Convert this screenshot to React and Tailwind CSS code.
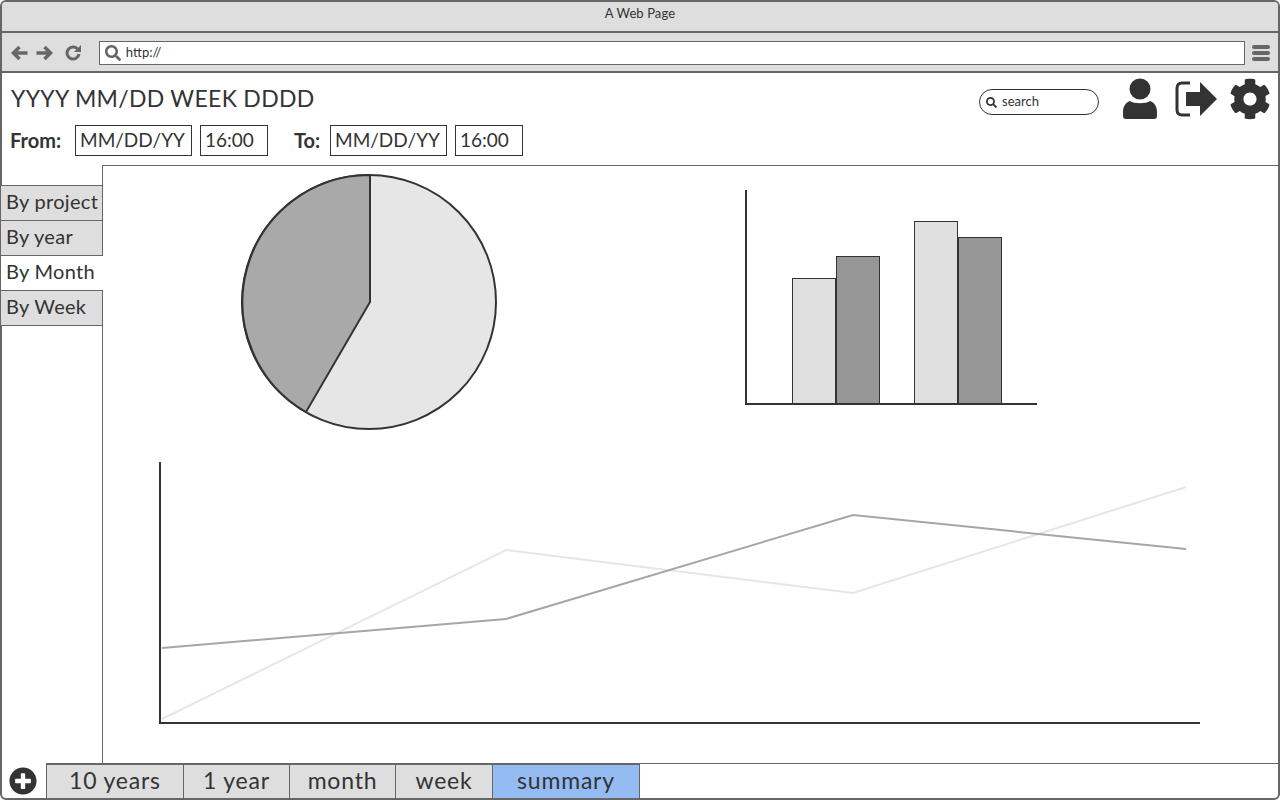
import { FaSearch, FaCog, FaPlusCircle } from 'react-icons/fa'

const font = { fontFamily: 'Lato, sans-serif' }

function PieChart() {
  return (
    <svg width="258" height="258" viewBox="0 0 258 258" className="block">
      <circle cx="128" cy="128" r="127" fill="#e6e6e6" stroke="#333" strokeWidth="2" />
      <path d="M129 128 L129 1 A127 127 0 0 0 65 238 Z" fill="#a9a9a9" stroke="#333" strokeWidth="2" />
    </svg>
  )
}

function BarChart() {
  return (
    <svg width="294" height="218" viewBox="0 0 294 218" className="block">
      <rect x="47.5" y="91.5" width="43" height="126" fill="#e0e0e0" stroke="#333" />
      <rect x="91.5" y="69.5" width="43" height="148" fill="#969696" stroke="#333" />
      <rect x="169.5" y="34.5" width="43" height="183" fill="#e0e0e0" stroke="#333" />
      <rect x="213.5" y="50.5" width="43" height="167" fill="#969696" stroke="#333" />
      <path d="M1 3 V217 H292" fill="none" stroke="#333" strokeWidth="2" />
    </svg>
  )
}

function LineChart() {
  return (
    <svg width="1042" height="262" viewBox="0 0 1042 262" className="block">
      <polyline points="3,257 347,88 694,131 1027,25" fill="none" stroke="#e6e6e6" strokeWidth="2" />
      <polyline points="3,186 347,157 694,53 1027,87" fill="none" stroke="#a6a6a6" strokeWidth="2" />
      <path d="M1 0 V261 H1041" fill="none" stroke="#333" strokeWidth="2" />
    </svg>
  )
}

function BackIcon() {
  return (
    <svg width="17" height="16" viewBox="0 0 17 16" fill="none" stroke="#666" strokeWidth="3.5">
      <path d="M8.5 2 L2.5 8 L8.5 14 M3 8 H16.5" />
    </svg>
  )
}

function ForwardIcon() {
  return (
    <svg width="17" height="16" viewBox="0 0 17 16" fill="none" stroke="#666" strokeWidth="3.5">
      <path d="M8.5 2 L14.5 8 L8.5 14 M14 8 H0.5" />
    </svg>
  )
}

function ReloadIcon() {
  return (
    <svg width="16" height="16" viewBox="0 0 16 16">
      <path d="M12.5 4 A6 6 0 1 0 14 9" fill="none" stroke="#666" strokeWidth="3" />
      <path d="M9 7 H16 V0 Z" fill="#666" />
    </svg>
  )
}

function UserIcon() {
  return (
    <svg width="36" height="42" viewBox="0 0 36 42" fill="#333">
      <circle cx="18" cy="11" r="10.5" />
      <path d="M8 23 C12 26 24 26 28 23 C33 25 35 29 35 34 V38 C35 40 34 41 32 41 H4 C2 41 1 40 1 38 V34 C1 29 3 25 8 23 Z" />
    </svg>
  )
}

function ExitIcon() {
  return (
    <svg width="44" height="36" viewBox="0 0 44 36" fill="#333">
      <path d="M15 2 H7 C4 2 2 4 2 7 V29 C2 32 4 34 7 34 H15" fill="none" stroke="#333" strokeWidth="3" />
      <path d="M11 11 H25 V1 L42 18 L25 35 V25 H11 Z" />
    </svg>
  )
}

function Field({ children, width }) {
  return (
    <div className={`h-[31px] border border-[#333] flex items-center pl-[4px] pb-[1px] text-[19px] text-[#333] ${width}`}>
      {children}
    </div>
  )
}

export default function App() {
  const sideTabs = [
    { label: 'By project', className: 'h-[36px] bg-[#dedede] border-t border-b border-r border-[#666]' },
    { label: 'By year', className: 'h-[35px] bg-[#dedede] border-b border-r border-[#666]' },
    { label: 'By Month', className: 'h-[35px] bg-white border-b border-[#666]' },
    { label: 'By Week', className: 'h-[35px] bg-[#dedede] border-b border-r border-[#666]' },
  ]
  const bottomTabs = [
    { label: '10 years', width: 'w-[138px]' },
    { label: '1 year', width: 'w-[107px]' },
    { label: 'month', width: 'w-[107px]' },
    { label: 'week', width: 'w-[98px]' },
    { label: 'summary', width: 'w-[148px]', active: true },
  ]

  return (
    <div style={font} className="w-[1280px] h-[800px] flex flex-col bg-white border-2 border-[#666] rounded-[6px] text-[#333]">
      {/* Title bar */}
      <div className="h-[31px] shrink-0 bg-[#dedede] rounded-t-[4px] border-b-2 border-[#666] flex items-center justify-center text-[13px] tracking-[0.1px] pb-[6px]">
        A Web Page
      </div>

      {/* Browser toolbar */}
      <div className="h-[40px] shrink-0 bg-[#dedede] border-b-2 border-[#666] flex items-center pt-[1px] pl-[9px] pr-[8px]">
        <div className="flex items-center w-[88px]">
          <BackIcon />
          <div className="ml-[8px]"><ForwardIcon /></div>
          <div className="ml-[12px]"><ReloadIcon /></div>
        </div>
        <div className="w-[1148px] h-[24px] bg-white border border-[#666] flex items-center pl-[5px] text-[13px]">
          <FaSearch size={16} className="text-[#666]" />
          <span className="ml-[5px]">http://</span>
        </div>
        <div className="ml-[7px] w-[18px] flex flex-col gap-[2px]">
          <div className="h-[4px] bg-[#666] rounded-full" />
          <div className="h-[4px] bg-[#666] rounded-full" />
          <div className="h-[4px] bg-[#666] rounded-full" />
        </div>
      </div>

      {/* Date header */}
      <div className="h-[92px] shrink-0 flex justify-between">
        <div className="pl-[8px] pt-[10px]">
          <div className="pl-[1px] text-[23px] leading-[30px] tracking-[0.3px]">YYYY MM/DD WEEK DDDD</div>
          <div className="flex items-center mt-[12px]">
            <span className="text-[20px] font-bold w-[65px] pb-[1px]">From:</span>
            <Field width="w-[117px]">MM/DD/YY</Field>
            <Field width="w-[68px] ml-[8px]">16:00</Field>
            <span className="text-[20px] font-bold ml-[26px] w-[36px] pb-[1px]">To:</span>
            <Field width="w-[117px]">MM/DD/YY</Field>
            <Field width="w-[68px] ml-[8px]">16:00</Field>
          </div>
        </div>
        <div className="flex items-start pt-[5px] pr-[7px]">
          <div className="mt-[11px] w-[120px] h-[26px] border border-[#333] rounded-full flex items-center pl-[6px] text-[13px]">
            <FaSearch size={11} />
            <span className="ml-[5px]">search</span>
          </div>
          <div className="ml-[23px]"><UserIcon /></div>
          <div className="ml-[17px] mt-[3px]"><ExitIcon /></div>
          <div className="ml-[10px]"><FaCog size={42} /></div>
        </div>
      </div>

      {/* Main */}
      <div className="flex-1 flex min-h-0">
        <div className="relative w-[100px] shrink-0 -ml-px pt-[20px] flex flex-col">
          {sideTabs.map((tab) => (
            <div
              key={tab.label}
              className={`w-[102px] pl-[5px] pb-[4px] flex items-center text-[20px] tracking-[0.3px] ${tab.className}`}
            >
              {tab.label}
            </div>
          ))}
        </div>
        <div className="flex-1 ml-px border-t border-l border-b border-[#666] pt-[8px] pl-[56px]">
          <div className="flex">
            <div className="ml-[82px]"><PieChart /></div>
            <div className="ml-[246px] mt-[13px]"><BarChart /></div>
          </div>
          <div className="mt-[30px]"><LineChart /></div>
        </div>
      </div>

      {/* Bottom tabs */}
      <div className="relative h-[35px] -mt-px shrink-0 flex">
        <div className="w-[44px] flex items-center justify-center pt-[1px] pr-[2px]">
          <FaPlusCircle size={28} />
        </div>
        {bottomTabs.map((tab) => (
          <div
            key={tab.label}
            className={`${tab.width} ${tab.active ? 'bg-[#94bcf2]' : 'bg-[#dedede]'} -mr-px border-t-2 border-l border-r border-[#666] pb-[2px] flex items-center justify-center text-[23px] tracking-[0.8px]`}
          >
            {tab.label}
          </div>
        ))}
      </div>
    </div>
  )
}
